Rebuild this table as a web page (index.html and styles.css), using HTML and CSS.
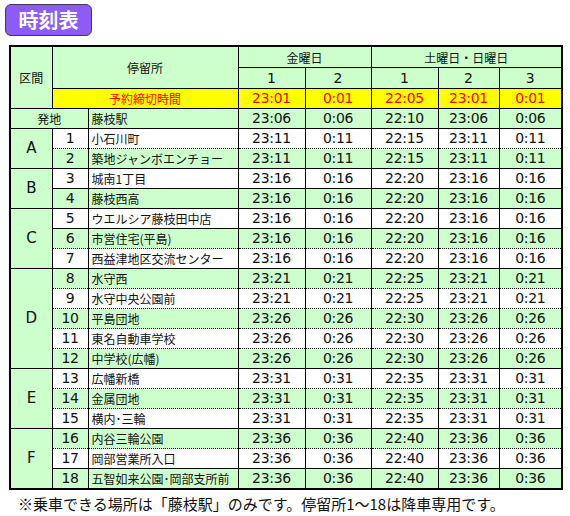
FILE: index.html
```html
<!DOCTYPE html>
<html lang="ja">
<head>
  <meta charset="UTF-8" />
  <title>時刻表</title>
  <link rel="stylesheet" href="styles.css">
</head>
<body>
  <div class="page">
    <div class="title">時刻表</div>
    <table class="timetable">
      <colgroup>
        <col class="c-sec"><col class="c-no"><col class="c-name">
        <col class="c-t1"><col class="c-t2"><col class="c-t3"><col class="c-t4"><col class="c-t5">
      </colgroup>
      <tr class="head">
        <td rowspan="3">区間</td>
        <td colspan="2" rowspan="2">停留所</td>
        <td colspan="2">金曜日</td>
        <td colspan="3">土曜日・日曜日</td>
      </tr>
      <tr class="head num">
        <td>1</td><td>2</td><td>1</td><td>2</td><td>3</td>
      </tr>
      <tr class="deadline">
        <td colspan="2" class="label">予約締切時間</td>
        <td>23:01</td><td>0:01</td><td>22:05</td><td>23:01</td><td>0:01</td>
      </tr>
      <tr class="g">
        <td colspan="2" class="jp">発地</td><td class="name">藤枝駅</td>
        <td>23:06</td><td>0:06</td><td>22:10</td><td>23:06</td><td>0:06</td>
      </tr>

      <tr class="w">
        <td rowspan="2" class="sec">A</td><td>1</td><td class="name">小石川町</td>
        <td>23:11</td><td>0:11</td><td>22:15</td><td>23:11</td><td>0:11</td>
      </tr>
      <tr class="g dot">
        <td>2</td><td class="name">築地ジャンボエンチョー</td>
        <td>23:11</td><td>0:11</td><td>22:15</td><td>23:11</td><td>0:11</td>
      </tr>

      <tr class="w">
        <td rowspan="2" class="sec">B</td><td>3</td><td class="name">城南1丁目</td>
        <td>23:16</td><td>0:16</td><td>22:20</td><td>23:16</td><td>0:16</td>
      </tr>
      <tr class="g">
        <td>4</td><td class="name">藤枝西高</td>
        <td>23:16</td><td>0:16</td><td>22:20</td><td>23:16</td><td>0:16</td>
      </tr>

      <tr class="w">
        <td rowspan="3" class="sec">C</td><td>5</td><td class="name">ウエルシア藤枝田中店</td>
        <td>23:16</td><td>0:16</td><td>22:20</td><td>23:16</td><td>0:16</td>
      </tr>
      <tr class="g">
        <td>6</td><td class="name">市営住宅(平島)</td>
        <td>23:16</td><td>0:16</td><td>22:20</td><td>23:16</td><td>0:16</td>
      </tr>
      <tr class="w dot">
        <td>7</td><td class="name">西益津地区交流センター</td>
        <td>23:16</td><td>0:16</td><td>22:20</td><td>23:16</td><td>0:16</td>
      </tr>

      <tr class="g">
        <td rowspan="5" class="sec">D</td><td>8</td><td class="name">水守西</td>
        <td>23:21</td><td>0:21</td><td>22:25</td><td>23:21</td><td>0:21</td>
      </tr>
      <tr class="w dot">
        <td>9</td><td class="name">水守中央公園前</td>
        <td>23:21</td><td>0:21</td><td>22:25</td><td>23:21</td><td>0:21</td>
      </tr>
      <tr class="g dot">
        <td>10</td><td class="name">平島団地</td>
        <td>23:26</td><td>0:26</td><td>22:30</td><td>23:26</td><td>0:26</td>
      </tr>
      <tr class="w dot">
        <td>11</td><td class="name">東名自動車学校</td>
        <td>23:26</td><td>0:26</td><td>22:30</td><td>23:26</td><td>0:26</td>
      </tr>
      <tr class="g dot">
        <td>12</td><td class="name">中学校(広幡)</td>
        <td>23:26</td><td>0:26</td><td>22:30</td><td>23:26</td><td>0:26</td>
      </tr>

      <tr class="w">
        <td rowspan="3" class="sec">E</td><td>13</td><td class="name">広幡新橋</td>
        <td>23:31</td><td>0:31</td><td>22:35</td><td>23:31</td><td>0:31</td>
      </tr>
      <tr class="g dot">
        <td>14</td><td class="name">金属団地</td>
        <td>23:31</td><td>0:31</td><td>22:35</td><td>23:31</td><td>0:31</td>
      </tr>
      <tr class="w dot">
        <td>15</td><td class="name">横内･三輪</td>
        <td>23:31</td><td>0:31</td><td>22:35</td><td>23:31</td><td>0:31</td>
      </tr>

      <tr class="g">
        <td rowspan="3" class="sec">F</td><td>16</td><td class="name">内谷三輪公園</td>
        <td>23:36</td><td>0:36</td><td>22:40</td><td>23:36</td><td>0:36</td>
      </tr>
      <tr class="w dot">
        <td>17</td><td class="name">岡部営業所入口</td>
        <td>23:36</td><td>0:36</td><td>22:40</td><td>23:36</td><td>0:36</td>
      </tr>
      <tr class="g">
        <td>18</td><td class="name">五智如来公園･岡部支所前</td>
        <td>23:36</td><td>0:36</td><td>22:40</td><td>23:36</td><td>0:36</td>
      </tr>
    </table>
    <p class="note">※乗車できる場所は「藤枝駅」のみです。停留所1〜18は降車専用です。</p>
  </div>
</body>
</html>
```

FILE: styles.css
```css
body {
  margin: 0;
  background: #fff;
  color: #111;
  font-family: "Noto Sans CJK JP", sans-serif;
}
.page {
  padding: 4px 0 0 5px;
}
.title {
  display: inline-block;
  width: 85px;
  height: 30px;
  line-height: 30px;
  text-align: center;
  background: #8b5cf6;
  border: 1px solid #3d3d5c;
  border-radius: 6px;
  color: #fff;
  font-size: 20px;
  font-weight: bold;
}
.timetable {
  margin: 9px 0 0 4px;
  border-collapse: collapse;
  border: 2px solid #000;
  table-layout: fixed;
  width: 552px;
  font-family: "DejaVu Sans", "Noto Sans CJK JP", sans-serif;
  font-size: 14px;
  letter-spacing: -0.3px;
}
.c-sec { width: 42px; }
.c-no { width: 36px; }
.c-name { width: 150px; }
.c-t1 { width: 67px; }
.c-t2 { width: 66px; }
.c-t3 { width: 67px; }
.c-t4 { width: 61px; }
.c-t5 { width: 63px; }

.timetable td {
  height: 19px;
  padding: 0;
  text-align: center;
  white-space: nowrap;
  border-left: 1px solid #000;
  border-right: 1px solid #000;
  border-top: 1px solid #000;
  border-bottom: none;
  line-height: 19px;
}
.timetable tr.dot td {
  border-top: 1px dotted #000;
}
.timetable td.sec {
  border-top: 1px solid #000;
  background: #ccffcc;
  font-size: 15px;
}
.head td {
  height: 20px;
  background: #ccffcc;
  font-family: "Noto Sans CJK JP", sans-serif;
  font-size: 12px;
  letter-spacing: 0;
}
.head.num td {
  font-family: "DejaVu Sans", sans-serif;
  font-size: 14px;
}
.deadline td {
  background: #ffff00;
  color: #ff0000;
}
.deadline td.label,
.timetable td.jp,
.timetable td.name {
  font-family: "Noto Sans CJK JP", sans-serif;
  font-size: 12px;
  letter-spacing: 0;
}
.timetable td.name {
  text-align: left;
  padding-left: 3px;
}
.g td { background: #ccffcc; }
.w td { background: #fff; }
.note {
  margin: 3px 0 0 13px;
  font-size: 15px;
  color: #111;
}
```
